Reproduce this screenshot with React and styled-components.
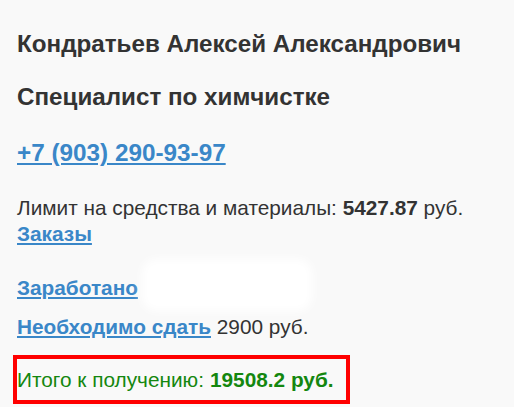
import React from "react";
import styled, { createGlobalStyle } from "styled-components";

const GlobalStyle = createGlobalStyle`
  html, body {
    margin: 0;
    padding: 0;
    background: #f9f9f9;
  }
  body {
    font-family: "Liberation Sans", Arial, sans-serif;
    color: #333333;
  }
`;

const Page = styled.div`
  padding: 24px 17px 0 17px;
  display: flex;
  flex-direction: column;
  align-items: flex-start;
`;

const Heading = styled.h2`
  margin: 0 0 ${(p) => p.$gap || 0}px 0;
  font-size: 24.2px;
  line-height: 40px;
  font-weight: bold;
`;

const Phone = styled.a`
  font-size: 24.3px;
  font-weight: bold;
  line-height: 40px;
  color: #3a87c8;
  text-decoration: underline;
  margin-bottom: 22px;
`;

const Line = styled.div`
  font-size: 20.8px;
  line-height: 26px;
  margin-bottom: ${(p) => p.$gap || 0}px;
`;

const Link = styled.a`
  color: #3a87c8;
  font-weight: bold;
  text-decoration: underline;
`;

const Hidden = styled.span`
  position: relative;
  display: inline-block;
  width: 8px;
  height: 10px;

  &::after {
    content: "";
    position: absolute;
    left: -2px;
    top: -26px;
    width: 170px;
    height: 52px;
    background: #ffffff;
    border-radius: 14px;
    filter: blur(5px);
  }
`;

const Total = styled.div`
  margin-top: 15px;
  margin-left: -4px;
  width: 329px;
  height: 41px;
  border: 4px solid #ff0000;
  display: flex;
  align-items: center;
  font-size: 20.8px;
  color: #14870f;
  b {
    margin-left: 6px;
  }
`;

export default function App() {
  return (
    <>
      <GlobalStyle />
      <Page>
        <Heading $gap={13}>Кондратьев Алексей Александрович</Heading>
        <Heading $gap={16}>Специалист по химчистке</Heading>
        <Phone href="#">+7 (903) 290-93-97</Phone>
        <Line>
          Лимит на средства и материалы: <b>5427.87</b> руб.
        </Line>
        <Line $gap={28}>
          <Link href="#">Заказы</Link>
        </Line>
        <Line $gap={13}>
          <Link href="#">Заработано</Link> <Hidden />
        </Line>
        <Line>
          <Link href="#">Необходимо сдать</Link> 2900 руб.
        </Line>
        <Total>
          Итого к получению: <b>19508.2 руб.</b>
        </Total>
      </Page>
    </>
  );
}
